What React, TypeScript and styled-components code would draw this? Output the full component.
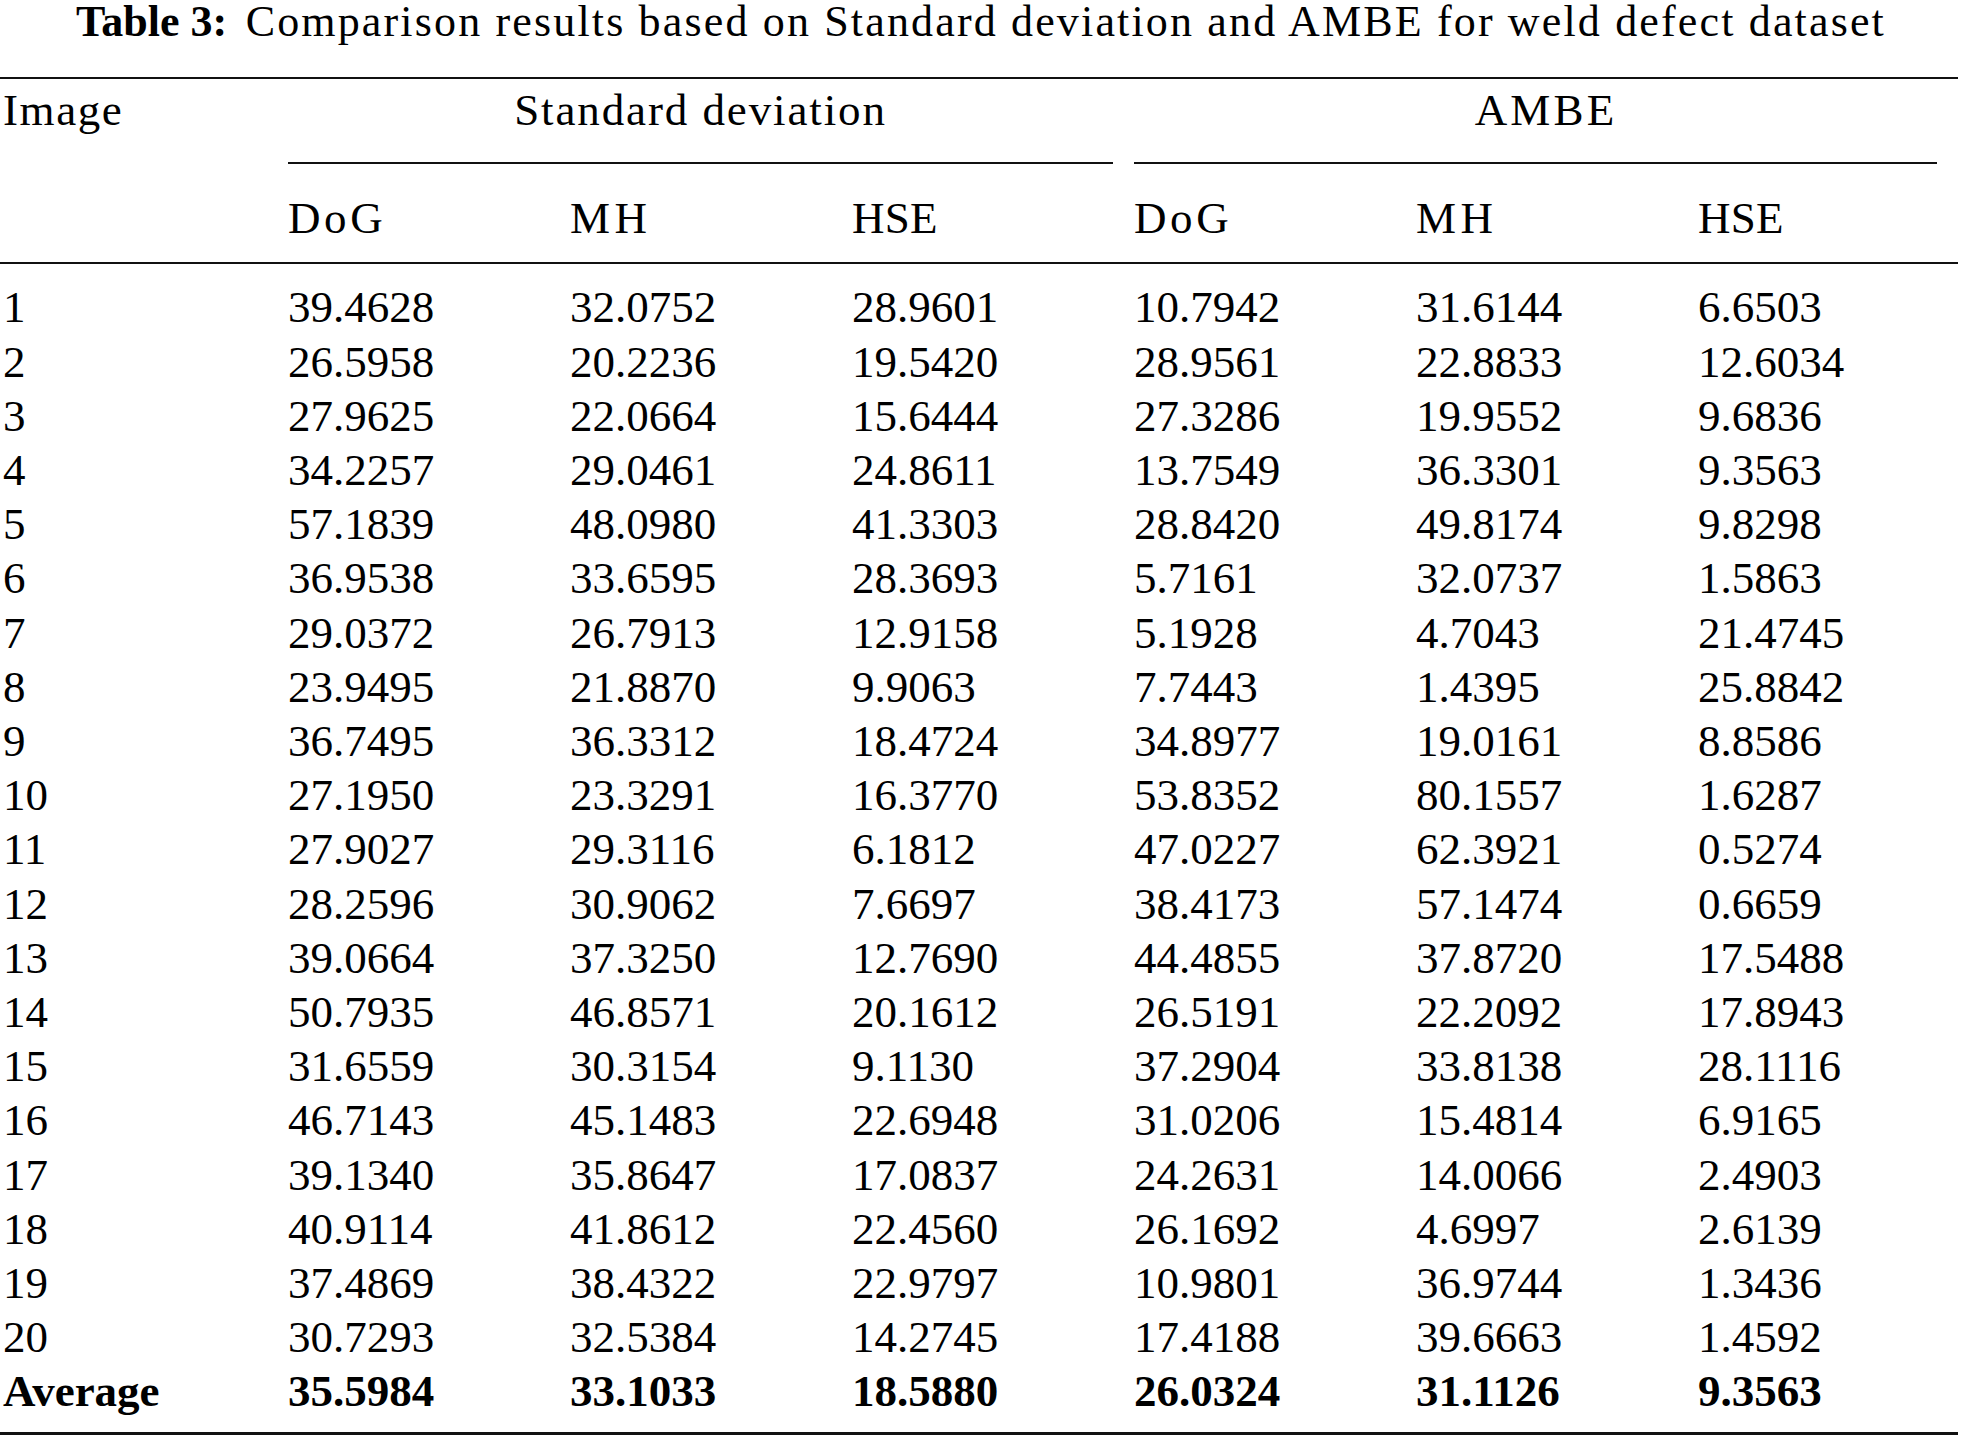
import React from 'react';
import styled, { createGlobalStyle } from 'styled-components';

const GlobalStyle = createGlobalStyle`
  html, body {
    margin: 0;
    padding: 0;
    background: #ffffff;
  }
  body {
    font-family: 'Liberation Serif', 'Times New Roman', serif;
    color: #000000;
  }
`;

const Page = styled.div`
  width: 1958px;
  display: flex;
  flex-direction: column;
  font-family: 'Liberation Serif', 'Times New Roman', serif;
`;

const Caption = styled.div`
  font-size: 44px;
  line-height: 44px;
  text-align: center;
  white-space: nowrap;
  width: 1962px;
  margin-bottom: 33px;
  letter-spacing: 0.049em;
`;

const CaptionLabel = styled.b`
  font-weight: bold;
  letter-spacing: 0;
  margin-right: 0.42em;
`;

const Grid = styled.div`
  display: grid;
  grid-template-columns: 288px repeat(5, 282px) 260px;
  font-size: 45px;
  line-height: 54.2px;
`;

const Rule = styled.div<{ $weight?: number; $span?: string; $trim?: number }>`
  grid-column: ${({ $span }) => $span || '1 / -1'};
  height: ${({ $weight }) => $weight || 2}px;
  background: #111111;
  margin-right: ${({ $trim }) => $trim || 0}px;
`;

const Cell = styled.div<{
  $span?: string;
  $align?: string;
  $first?: boolean;
  $bold?: boolean;
  $text?: number;
  $pt?: number;
  $pb?: number;
  $pr?: number;
}>`
  grid-column: ${({ $span }) => $span || 'auto'};
  text-align: ${({ $align }) => $align || 'left'};
  padding-left: ${({ $first }) => ($first ? 3 : 0)}px;
  padding-right: ${({ $pr }) => $pr || 0}px;
  padding-top: ${({ $pt }) => $pt || 0}px;
  padding-bottom: ${({ $pb }) => $pb || 0}px;
  font-weight: ${({ $bold }) => ($bold ? 'bold' : 'normal')};
  letter-spacing: ${({ $text }) => ($text ? `${$text}em` : 'normal')};
  white-space: nowrap;
`;

const Gap = styled.div<{ $h: number }>`
  grid-column: 1 / -1;
  height: ${({ $h }) => $h}px;
`;

const rows: string[][] = [
  ['1', '39.4628', '32.0752', '28.9601', '10.7942', '31.6144', '6.6503'],
  ['2', '26.5958', '20.2236', '19.5420', '28.9561', '22.8833', '12.6034'],
  ['3', '27.9625', '22.0664', '15.6444', '27.3286', '19.9552', '9.6836'],
  ['4', '34.2257', '29.0461', '24.8611', '13.7549', '36.3301', '9.3563'],
  ['5', '57.1839', '48.0980', '41.3303', '28.8420', '49.8174', '9.8298'],
  ['6', '36.9538', '33.6595', '28.3693', '5.7161', '32.0737', '1.5863'],
  ['7', '29.0372', '26.7913', '12.9158', '5.1928', '4.7043', '21.4745'],
  ['8', '23.9495', '21.8870', '9.9063', '7.7443', '1.4395', '25.8842'],
  ['9', '36.7495', '36.3312', '18.4724', '34.8977', '19.0161', '8.8586'],
  ['10', '27.1950', '23.3291', '16.3770', '53.8352', '80.1557', '1.6287'],
  ['11', '27.9027', '29.3116', '6.1812', '47.0227', '62.3921', '0.5274'],
  ['12', '28.2596', '30.9062', '7.6697', '38.4173', '57.1474', '0.6659'],
  ['13', '39.0664', '37.3250', '12.7690', '44.4855', '37.8720', '17.5488'],
  ['14', '50.7935', '46.8571', '20.1612', '26.5191', '22.2092', '17.8943'],
  ['15', '31.6559', '30.3154', '9.1130', '37.2904', '33.8138', '28.1116'],
  ['16', '46.7143', '45.1483', '22.6948', '31.0206', '15.4814', '6.9165'],
  ['17', '39.1340', '35.8647', '17.0837', '24.2631', '14.0066', '2.4903'],
  ['18', '40.9114', '41.8612', '22.4560', '26.1692', '4.6997', '2.6139'],
  ['19', '37.4869', '38.4322', '22.9797', '10.9801', '36.9744', '1.3436'],
  ['20', '30.7293', '32.5384', '14.2745', '17.4188', '39.6663', '1.4592'],
];

const average = ['Average', '35.5984', '33.1033', '18.5880', '26.0324', '31.1126', '9.3563'];

// letter spacing per method label, to match the wider glyphs of the original type
const methods: [string, number][] = [
  ['DoG', 0.08],
  ['MH', 0.1],
  ['HSE', 0.005],
  ['DoG', 0.08],
  ['MH', 0.1],
  ['HSE', 0.005],
];

const App: React.FC = () => {
  return (
    <Page>
      <GlobalStyle />
      <Caption>
        <CaptionLabel>Table 3:</CaptionLabel>
        Comparison results based on Standard deviation and AMBE for weld defect dataset
      </Caption>
      <Grid>
        <Rule />
        <Cell $first $text={0.035} $pt={4} $pb={25}>
          Image
        </Cell>
        <Cell $span="2 / 5" $align="center" $text={0.042} $pt={4} $pb={25} $pr={21}>
          Standard deviation
        </Cell>
        <Cell $span="5 / 8" $align="center" $text={0.07} $pt={4} $pb={25}>
          AMBE
        </Cell>
        <Rule $span="2 / 5" $trim={21} />
        <Rule $span="5 / 8" $trim={21} />
        <Gap $h={27} />
        <Cell $first />
        {methods.map(([m, ls], i) => (
          <Cell key={i} $text={ls}>
            {m}
          </Cell>
        ))}
        <Gap $h={17} />
        <Rule />
        <Gap $h={16} />
        {rows.map((row) =>
          row.map((v, j) => (
            <Cell key={row[0] + '-' + j} $first={j === 0}>
              {v}
            </Cell>
          ))
        )}
        {average.map((v, j) => (
          <Cell key={'avg-' + j} $first={j === 0} $bold>
            {v}
          </Cell>
        ))}
        <Gap $h={13} />
        <Rule $weight={3} />
      </Grid>
    </Page>
  );
};

export default App;
